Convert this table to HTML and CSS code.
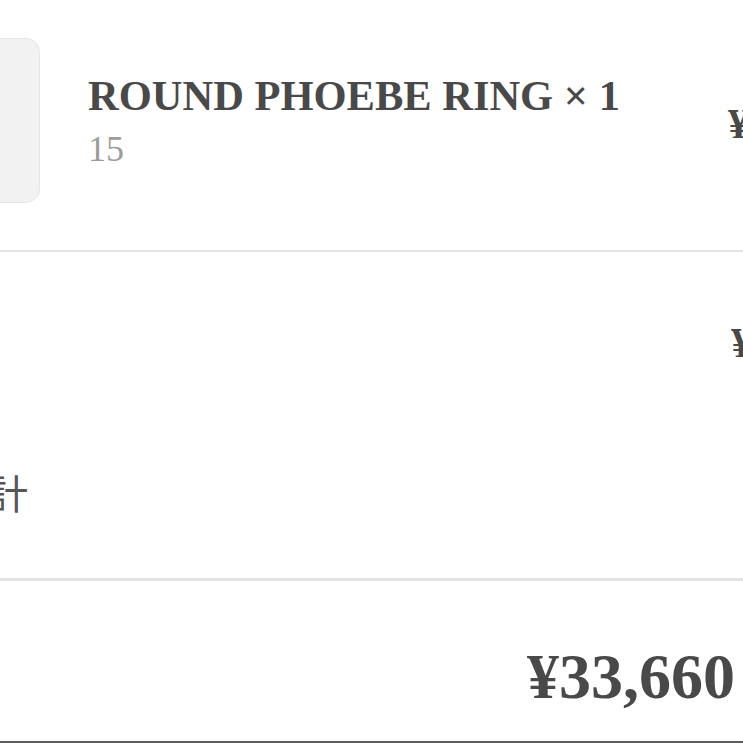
FILE: index.html
```html
<!DOCTYPE html>
<html lang="ja">
<head>
    <meta charset="UTF-8">
    <meta name="viewport" content="width=device-width, initial-scale=1.0">
    <title>ご注文内容</title>
    <link rel="stylesheet" href="styles.css">
</head>
<body>
    <div class="summary">
        <!-- 商品 -->
        <div class="item-row">
            <div class="thumb"></div>
            <div class="item-info">
                <p class="item-name">ROUND PHOEBE RING × 1</p>
                <p class="item-size">15</p>
            </div>
            <p class="price">¥33,660</p>
        </div>

        <!-- 小計 -->
        <div class="sub-section">
            <div class="line-row">
                <p class="label">小計</p>
                <p class="price">¥33,660</p>
            </div>
            <div class="line-row note-row">
                <p class="label">税込合計</p>
            </div>
        </div>

        <!-- 合計 -->
        <div class="total-section">
            <p class="total">¥33,660</p>
        </div>
    </div>
</body>
</html>
```

FILE: styles.css
```css
body {
    margin: 0;
    padding: 0;
    background-color: #fff;
    color: #494949;
    font-family: "Liberation Serif", "Noto Sans CJK JP", serif;
    width: 743px;
    height: 743px;
    overflow: hidden;
}

p {
    margin: 0;
}

.summary {
    margin-left: -125px;
    width: 1053px;
}

.item-row {
    display: grid;
    grid-template-columns: 165px 1fr 200px;
    column-gap: 48px;
    padding: 38px 0 47px;
    border-bottom: 2px solid #e6e6e6;
}

.thumb {
    height: 163px;
    background-color: #f2f2f2;
    border: 1px solid #e6e6e6;
    border-radius: 14px;
}

.item-info {
    padding-top: 33px;
}

.item-name {
    font-size: 42.5px;
    font-weight: bold;
    line-height: 50px;
    white-space: nowrap;
}

.item-size {
    font-size: 36px;
    line-height: 43px;
    margin-top: 7px;
    color: #9c9c9c;
}

.price {
    font-size: 42px;
    font-weight: bold;
    line-height: 50px;
    white-space: nowrap;
    align-self: start;
    margin-top: 61px;
}

.sub-section {
    padding: 66px 0 61px;
    border-bottom: 3px solid #e4e4e4;
}

.line-row {
    display: grid;
    grid-template-columns: 1fr 200px;
    column-gap: 48px;
}

.line-row .price {
    margin-top: 0;
    padding-left: 3px;
}

.label {
    font-family: "Noto Sans CJK JP", sans-serif;
    font-size: 40px;
    line-height: 50px;
    color: #555;
}

.note-row {
    margin-top: 99px;
}

.note-row .label {
    margin-left: -7px;
}

.total-section {
    padding: 57px 193px 26px 0;
    border-bottom: 2px solid #5c5c5c;
    text-align: right;
}

.total {
    font-size: 64px;
    font-weight: bold;
    line-height: 77px;
}
```
